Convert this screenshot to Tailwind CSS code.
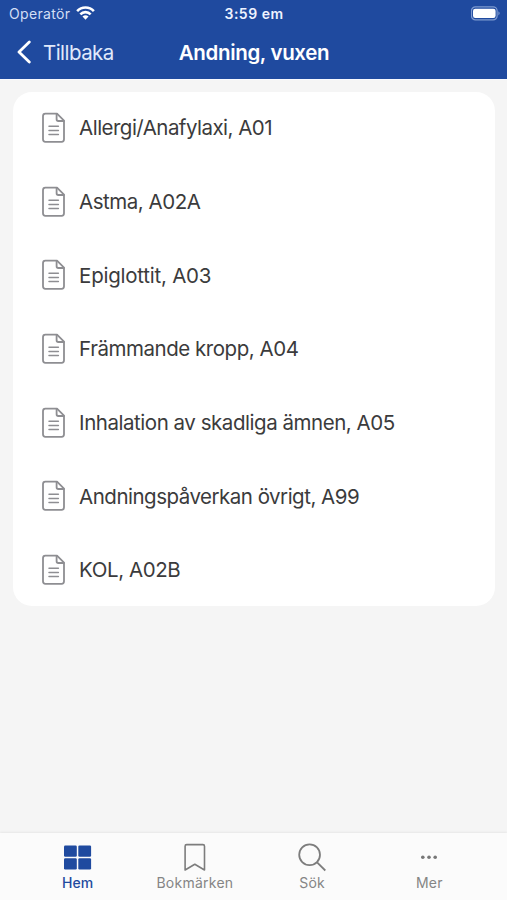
<!DOCTYPE html>
<html lang="sv">
<head>
<meta charset="utf-8">
<title>Andning, vuxen</title>
<script src="https://cdn.jsdelivr.net/npm/@tailwindcss/browser@4"></script>
</head>
<body class="w-[507px] h-[900px] overflow-hidden bg-[#f5f5f5] font-['Inter','Liberation_Sans',sans-serif] flex flex-col whitespace-nowrap">
<svg class="hidden">
  <symbol id="doc" viewBox="0 0 24 32">
    <g fill="none" stroke="#8e8e92" stroke-width="1.8" stroke-linejoin="round" stroke-linecap="round">
      <path d="M3.4 1.7H15L22 8.7V27.3Q22 29.8 19.6 29.8H3.4Q1 29.8 1 27.3V4.2Q1 1.7 3.4 1.7Z"/>
      <path d="M14.6 2V7.3Q14.6 9 16.3 9H21.8"/>
      <path d="M7 14.3H16.4M7 18.4H16.4M7 22.5H16.4" stroke-width="1.5"/>
    </g>
  </symbol>
</svg>
<header class="h-[79px] shrink-0 bg-[#1f4a9f] text-white">
  <div class="h-[27px] grid grid-cols-3 items-center px-[9px]">
    <div class="flex items-center gap-[6px] text-[14px] text-[#d3dff5] tracking-[0.35px]">
      <span class="w-[61px]">Operatör</span>
      <svg class="w-[19px] h-[14px] -mt-[2px]" viewBox="0 0 20 14" fill="none" stroke="#fff" stroke-width="2.7"><path d="M1.2 5C6-.1 14-.1 18.8 5M4.6 8.5C7.5 5.3 12.5 5.3 15.4 8.5"/><path d="M10 14 6.8 10.8Q10 8 13.2 10.8Z" fill="#fff" stroke="none"/></svg>
    </div>
    <div class="text-center text-[14px] font-semibold tracking-[0.5px] text-[#eef3ff] pl-px">3:59 em</div>
    <div class="flex justify-end -mr-[4px]">
      <svg class="w-[31px] h-[15px]" viewBox="0 0 31 15"><rect x=".5" y=".8" width="25.6" height="13.1" rx="4" fill="none" stroke="#7f9bd0" stroke-width="1.2"/><rect x="2" y="2.7" width="22.6" height="9.3" rx="2.2" fill="#fff"/><path d="M27.4 5.2Q30 7.2 27.4 9.4Z" fill="#7f9bd0"/></svg>
    </div>
  </div>
  <div class="h-[52px] grid grid-cols-[1fr_auto_1fr] items-start pl-[17px] pr-[16px]">
    <div class="flex items-center h-[50px] text-[20.5px] tracking-[-0.55px] text-[#e0e9fb]">
      <svg class="w-[14px] h-[24px] mr-[12px]" viewBox="0 0 14 24" fill="none" stroke="#fff" stroke-width="2.8" stroke-linecap="round" stroke-linejoin="round"><path d="M12.3 2 2 12 12.3 22"/></svg>
      <span class="pt-[2px]">Tillbaka</span>
    </div>
    <h1 class="h-[50px] pt-[2px] flex items-center text-[20.5px] tracking-[-0.35px] font-semibold">Andning, vuxen</h1>
    <span></span>
  </div>
</header>
<main class="flex-1 pt-[13px] px-[13px] border-t border-[#f8faff]">
  <ul class="h-[514px] -mt-px w-[482px] rounded-[19px] bg-white flex flex-col justify-center text-[20.5px] text-[#3b3b3c]">
    <li class="h-[73.67px] shrink-0 flex items-center gap-[13.5px] pl-[28.6px] tracking-[-0.53px]"><svg class="w-[24px] h-[32px]"><use href="#doc"/></svg><span class="pt-[1.5px]">Allergi/Anafylaxi, A01</span></li>
    <li class="h-[73.67px] shrink-0 flex items-center gap-[13.5px] pl-[28.6px] tracking-[-0.48px]"><svg class="w-[24px] h-[32px]"><use href="#doc"/></svg><span class="pt-[1.5px]">Astma, A02A</span></li>
    <li class="h-[73.67px] shrink-0 flex items-center gap-[13.5px] pl-[28.6px] tracking-[-0.24px]"><svg class="w-[24px] h-[32px]"><use href="#doc"/></svg><span class="pt-[1.5px]">Epiglottit, A03</span></li>
    <li class="h-[73.67px] shrink-0 flex items-center gap-[13.5px] pl-[28.6px] tracking-[-0.46px]"><svg class="w-[24px] h-[32px]"><use href="#doc"/></svg><span class="pt-[1.5px]">Främmande kropp, A04</span></li>
    <li class="h-[73.67px] shrink-0 flex items-center gap-[13.5px] pl-[28.6px] tracking-[-0.46px]"><svg class="w-[24px] h-[32px]"><use href="#doc"/></svg><span class="pt-[1.5px]">Inhalation av skadliga ämnen, A05</span></li>
    <li class="h-[73.67px] shrink-0 flex items-center gap-[13.5px] pl-[28.6px] tracking-[-0.5px]"><svg class="w-[24px] h-[32px]"><use href="#doc"/></svg><span class="pt-[1.5px]">Andningspåverkan övrigt, A99</span></li>
    <li class="h-[73.67px] shrink-0 flex items-center gap-[13.5px] pl-[28.6px] tracking-[-0.42px]"><svg class="w-[24px] h-[32px]"><use href="#doc"/></svg><span class="pt-[1.5px]">KOL, A02B</span></li>
  </ul>
</main>
<nav class="h-[67px] shrink-0 bg-[#fbfbfb] shadow-[0_-1px_2px_rgba(0,0,0,0.06)] grid grid-cols-4 px-[19px] pt-[8px] text-[14px] leading-[18px] text-[#858585]">
  <a class="flex flex-col items-center gap-px text-[#1f4a9f] font-medium"><svg class="w-[32px] h-[32px]" viewBox="0 0 32 32" fill="#1f4a9f"><rect x="2" y="4.5" width="12.8" height="11.2" rx="1.2"/><rect x="16.3" y="4.5" width="12.8" height="11.2" rx="1.2"/><rect x="2" y="17.2" width="12.8" height="11.2" rx="1.2"/><rect x="16.3" y="17.2" width="12.8" height="11.2" rx="1.2"/></svg>Hem</a>
  <a class="flex flex-col items-center gap-px tracking-[0.25px]"><svg class="w-[32px] h-[32px]" viewBox="0 0 32 32" fill="none" stroke="#7d7d7d" stroke-width="1.6" stroke-linejoin="round"><path d="M6.1 29V5.2Q6.1 3.6 7.7 3.6H23.9Q25.5 3.6 25.5 5.2V29L15.8 23.2Z"/></svg>Bokmärken</a>
  <a class="flex flex-col items-center gap-px tracking-[0.25px]"><svg class="w-[32px] h-[32px]" viewBox="0 0 32 32" fill="none" stroke="#7d7d7d" stroke-width="1.8"><circle cx="13.6" cy="13.8" r="10.4"/><path d="M21.1 21.3 29.3 29.5"/></svg>Sök</a>
  <a class="flex flex-col items-center gap-px tracking-[0.25px]"><svg class="w-[32px] h-[32px]" viewBox="0 0 32 32" fill="#777"><circle cx="9.8" cy="16.2" r="1.8"/><circle cx="16" cy="16.2" r="1.8"/><circle cx="22.2" cy="16.2" r="1.8"/></svg>Mer</a>
</nav>
</body>
</html>
